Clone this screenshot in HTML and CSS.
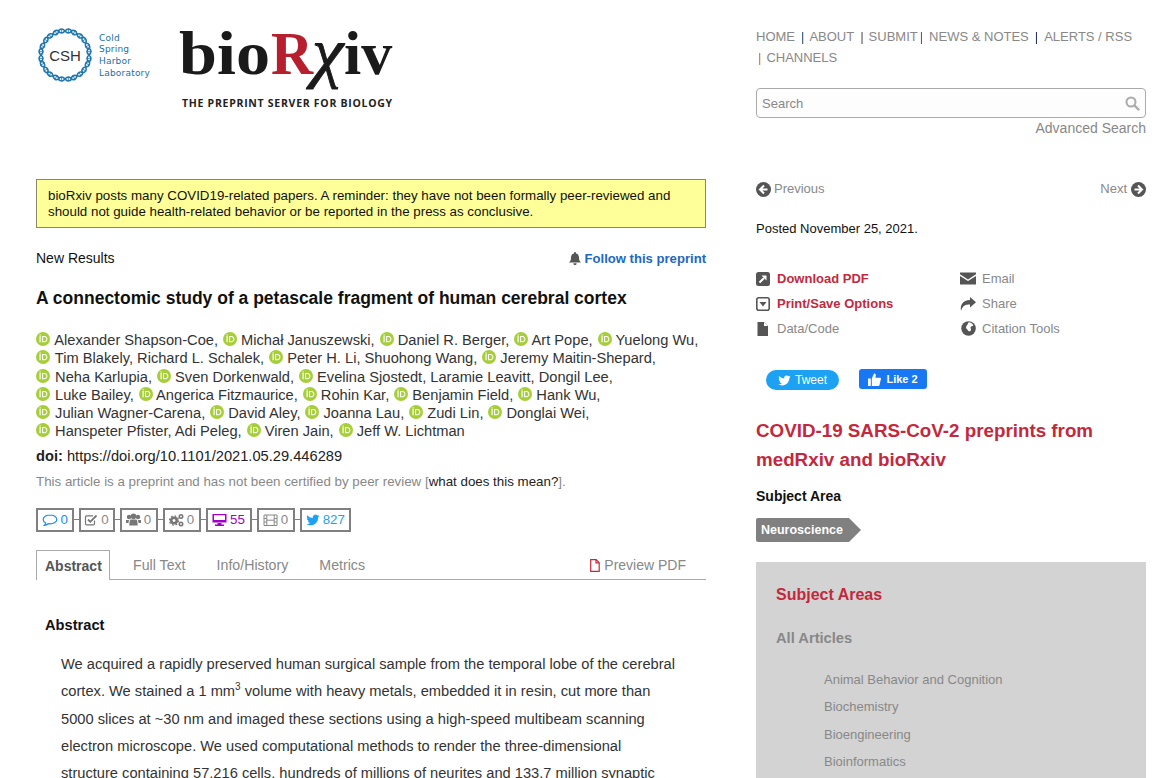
FILE: index.html
```html
<!DOCTYPE html>
<html lang="en">
<head>
<meta charset="utf-8">
<title>bioRxiv</title>
<link rel="stylesheet" href="styles.css">
</head>
<body>
<svg class="defs" width="0" height="0" aria-hidden="true">
  <defs>
    <symbol id="orcid" viewBox="0 0 12 12">
      <circle cx="6" cy="6" r="6" fill="#a6ce39"/>
      <rect x="3" y="3.400" width="1" height="5.400" fill="#fff"/>
      <rect x="3" y="2" width="1" height="1" fill="#fff"/>
      <path d="M5.200 3.400h2c1.700 0 2.600 1.200 2.600 2.700S8.900 8.800 7.200 8.800h-2zM6.100 4.200v3.800h1.100c1.100 0 1.700-.8 1.700-1.900S8.300 4.200 7.200 4.200z" fill="#fff" fill-rule="evenodd"/>
    </symbol>
    <g id="helix">
      <path d="M-6.800 -24 Q-3.400 -28 0 -24 Q3.400 -20 6.800 -24" fill="none" stroke="#1f77ae" stroke-width="1.600"/>
      <path d="M-6.800 -24 Q-3.400 -20 0 -24 Q3.400 -28 6.800 -24" fill="none" stroke="#1f77ae" stroke-width="1.600"/>
      <path d="M-3.400 -26 V-22 M3.400 -26 V-22" stroke="#1f77ae" stroke-width=".8"/>
    </g>
  </defs>
</svg>
<div class="page">
  <main class="main">
    <header class="brand">
      <a class="csh">
        <span class="ring">
          <svg width="54" height="54" viewBox="-27 -27 54 54">
            <use href="#helix"/><use href="#helix" transform="rotate(30)"/><use href="#helix" transform="rotate(60)"/><use href="#helix" transform="rotate(90)"/><use href="#helix" transform="rotate(120)"/><use href="#helix" transform="rotate(150)"/><use href="#helix" transform="rotate(180)"/><use href="#helix" transform="rotate(210)"/><use href="#helix" transform="rotate(240)"/><use href="#helix" transform="rotate(270)"/><use href="#helix" transform="rotate(300)"/><use href="#helix" transform="rotate(330)"/>
          </svg>
          <span class="ring-text">CSH</span>
        </span>
        <span class="csh-name">Cold<br>Spring<br>Harbor<br>Laboratory</span>
      </a>
      <a class="biorxiv">
        <span class="wordmark"><span class="wm-bio">bio</span><span class="wm-r">R</span><span class="wm-chi">χ</span><span class="wm-iv">iv</span></span>
        <span class="tagline">THE PREPRINT SERVER FOR BIOLOGY</span>
      </a>
    </header>

    <div class="notice">bioRxiv posts many COVID19-related papers. A reminder: they have not been formally peer-reviewed and should not guide health-related behavior or be reported in the press as conclusive.</div>

    <div class="kind-row">
      <span class="kind">New Results</span>
      <a class="follow">
        <svg class="i-bell" width="12" height="13" viewBox="0 0 12 13"><path d="M6 0a1 1 0 0 1 1 1v.6c2 .4 3 2 3 3.900 0 2.500.6 3.800 2 5H0c1.400-1.200 2-2.500 2-5C2 3.600 3 2 5 1.600V1a1 1 0 0 1 1-1zM4.500 11.200h3A1.500 1.500 0 0 1 6 13a1.500 1.500 0 0 1-1.500-1.800z" fill="#555"/></svg>
        Follow this preprint</a>
    </div>

    <h1 class="title">A connectomic study of a petascale fragment of human cerebral cortex</h1>

    <div class="authors">
      <div class="a-line"><svg class="orcid"><use href="#orcid"/></svg> Alexander Shapson-Coe, <svg class="orcid"><use href="#orcid"/></svg> Michał Januszewski, <svg class="orcid"><use href="#orcid"/></svg> Daniel R. Berger, <svg class="orcid"><use href="#orcid"/></svg> Art Pope, <svg class="orcid"><use href="#orcid"/></svg> Yuelong Wu,</div>
      <div class="a-line"><svg class="orcid"><use href="#orcid"/></svg> Tim Blakely, Richard L. Schalek, <svg class="orcid"><use href="#orcid"/></svg> Peter H. Li, Shuohong Wang, <svg class="orcid"><use href="#orcid"/></svg> Jeremy Maitin-Shepard,</div>
      <div class="a-line"><svg class="orcid"><use href="#orcid"/></svg> Neha Karlupia, <svg class="orcid"><use href="#orcid"/></svg> Sven Dorkenwald, <svg class="orcid"><use href="#orcid"/></svg> Evelina Sjostedt, Laramie Leavitt, Dongil Lee,</div>
      <div class="a-line"><svg class="orcid"><use href="#orcid"/></svg> Luke Bailey, <svg class="orcid"><use href="#orcid"/></svg> Angerica Fitzmaurice, <svg class="orcid"><use href="#orcid"/></svg> Rohin Kar, <svg class="orcid"><use href="#orcid"/></svg> Benjamin Field, <svg class="orcid"><use href="#orcid"/></svg> Hank Wu,</div>
      <div class="a-line"><svg class="orcid"><use href="#orcid"/></svg> Julian Wagner-Carena, <svg class="orcid"><use href="#orcid"/></svg> David Aley, <svg class="orcid"><use href="#orcid"/></svg> Joanna Lau, <svg class="orcid"><use href="#orcid"/></svg> Zudi Lin, <svg class="orcid"><use href="#orcid"/></svg> Donglai Wei,</div>
      <div class="a-line"><svg class="orcid"><use href="#orcid"/></svg> Hanspeter Pfister, Adi Peleg, <svg class="orcid"><use href="#orcid"/></svg> Viren Jain, <svg class="orcid"><use href="#orcid"/></svg> Jeff W. Lichtman</div>
    </div>

    <div class="doi"><b>doi:</b> https://doi.org/10.1101/2021.05.29.446289</div>
    <div class="cert">This article is a preprint and has not been certified by peer review [<a class="cert-link">what does this mean?</a>].</div>

    <div class="badges">
      <span class="badge b-blue">
        <svg width="16" height="14" viewBox="0 0 16 14"><path d="M8 2C4.300 2 1.200 4 1.200 6.500c0 1.400 1 2.700 2.500 3.500-.2 1-.8 1.800-1.400 2.400 1.400-.2 2.800-.8 3.800-1.700.6.100 1.200.2 1.900.2 3.700 0 6.800-2 6.800-4.400S11.700 2 8 2z" fill="none" stroke="#1e88ff" stroke-width="1.200"/></svg>
        0</span>
      <span class="badge">
        <svg width="14" height="14" viewBox="0 0 14 14"><path d="M10.500 7.500v3.300a1 1 0 0 1-1 1H2.500a1 1 0 0 1-1-1V3.800a1 1 0 0 1 1-1h6.500" fill="none" stroke="#777" stroke-width="1.200"/><path d="M4 6.500l2.300 2.300L12.500 2.500" fill="none" stroke="#777" stroke-width="1.800"/></svg>
        0</span>
      <span class="badge">
        <svg width="15" height="13" viewBox="0 1 15 12"><g fill="#777"><circle cx="3" cy="4.500" r="2.200"/><circle cx="12" cy="4.500" r="2.200"/><circle cx="7.500" cy="3.800" r="2.800"/><path d="M0 7.500h3.200c-.5 1-.7 2-.7 3H0zM15 7.500h-3.200c.5 1 .7 2 .7 3H15zM4.500 7h6c.8 1 1.200 3 1.200 6H3.300C3.300 10 3.700 8 4.500 7z"/></g></svg>
        0</span>
      <span class="badge">
        <svg width="15" height="14" viewBox="0 0 15 14"><g fill="none" stroke="#777"><circle cx="5" cy="7.500" r="2.800" stroke-width="2.600"/><circle cx="5" cy="7.500" r="4.600" stroke-width="1.200" stroke-dasharray="1.800 1.800"/><circle cx="12" cy="3.500" r="1.700" stroke-width="1.600"/><circle cx="12" cy="11" r="1.700" stroke-width="1.600"/></g></svg>
        0</span>
      <span class="badge b-purple">
        <svg width="15" height="14" viewBox="0 0 15 14"><path d="M.5 1h14v8.500H.5zM2 2.300v5.900h11V2.300zM5.500 10h4v1.600h2.500V13H3v-1.400h2.500z" fill="#a000c8" fill-rule="evenodd"/><rect x="1" y="7" width="13" height="2" fill="#a000c8"/></svg>
        55</span>
      <span class="badge">
        <svg width="15" height="14" viewBox="0 0 15 14"><path d="M1 2h13v10.500H1zM3.800 2v10.500M11.200 2v10.500M1 5.500h2.800M1 9h2.800M11.200 5.500H14M11.200 9H14M3.800 7.200h7.400" fill="none" stroke="#888" stroke-width="1"/></svg>
        0</span>
      <span class="badge b-tw">
        <svg width="14" height="14" viewBox="0 0 24 24"><path d="M23 4.900c-.8.400-1.700.6-2.600.8.900-.6 1.700-1.500 2-2.500-.9.500-1.900.9-2.900 1.100A4.600 4.600 0 0 0 11.600 8.500C7.800 8.300 4.400 6.500 2.100 3.700c-1.200 2.100-.6 4.800 1.400 6.100-.7 0-1.400-.2-2.100-.6 0 2.200 1.600 4.200 3.700 4.600-.7.200-1.400.2-2.100.1.600 1.900 2.300 3.200 4.300 3.200A9.300 9.300 0 0 1 .5 19c2.100 1.300 4.500 2.100 7.100 2.100 8.700 0 13.600-7.300 13.300-13.900.9-.6 1.700-1.400 2.300-2.300z" fill="#1da1f2"/></svg>
        827</span>
    </div>

    <nav class="tabs">
      <a class="tab tab-active">Abstract</a>
      <a class="tab">Full Text</a>
      <a class="tab">Info/History</a>
      <a class="tab">Metrics</a>
      <a class="tab tab-pdf">
        <svg width="10" height="13" viewBox="0 0 10 13"><path d="M.7.700h5.500l3 3v8.600H.7zM6 .7v3.200h3.200" fill="none" stroke="#c4283d" stroke-width="1.200"/></svg>
        Preview PDF</a>
    </nav>

    <section class="abstract">
      <h2 class="abs-head">Abstract</h2>
      <p class="abs-text">We acquired a rapidly preserved human surgical sample from the temporal lobe of the cerebral cortex. We stained a 1 mm<sup>3</sup> volume with heavy metals, embedded it in resin, cut more than 5000 slices at ~30 nm and imaged these sections using a high-speed multibeam scanning electron microscope. We used computational methods to render the three-dimensional structure containing 57,216 cells, hundreds of millions of neurites and 133.7 million synaptic</p>
    </section>
  </main>

  <aside class="side">
    <nav class="topnav">
      <a>HOME</a><i class="sep s1">|</i><a>ABOUT</a><i class="sep s2">|</i><a>SUBMIT</a><i class="sep s3">|</i><a>NEWS &amp; NOTES</a><i class="sep s4">|</i><a>ALERTS / RSS</a><br><i class="sep s5">|</i><a>CHANNELS</a>
    </nav>
    <div class="search">
      <span>Search</span>
      <svg width="15" height="15" viewBox="0 0 15 15"><circle cx="6" cy="6" r="4.500" fill="none" stroke="#aaa" stroke-width="2"/><path d="M9.500 9.500l4 4" stroke="#aaa" stroke-width="2.400" stroke-linecap="round"/></svg>
    </div>
    <a class="adv">Advanced Search</a>

    <div class="pager">
      <a class="pg">
        <svg width="15" height="15" viewBox="0 0 15 15"><circle cx="7.500" cy="7.500" r="7.500" fill="#555"/><path d="M8 3.500L4 7.500l4 4M4.500 7.500h7" fill="none" stroke="#fff" stroke-width="2"/></svg>
        Previous</a>
      <a class="pg">Next
        <svg width="15" height="15" viewBox="0 0 15 15"><circle cx="7.500" cy="7.500" r="7.500" fill="#555"/><path d="M7 3.500l4 4-4 4M10.500 7.500h-7" fill="none" stroke="#fff" stroke-width="2"/></svg>
      </a>
    </div>

    <p class="posted">Posted November 25, 2021.</p>

    <div class="tools">
      <a class="tool tool-red"><svg width="14" height="14" viewBox="0 0 14 14"><rect width="14" height="14" rx="2.500" fill="#555"/><path d="M3.500 10.500L8 6" stroke="#fff" stroke-width="2"/><path d="M5.500 3.500h5v5z" fill="#fff"/></svg>Download PDF</a>
      <a class="tool tool-wide"><svg width="16" height="13" viewBox="0 0 16 13"><path d="M0 .5h16v1.800L8 7.500 0 2.300zM0 4l8 5 8-5v8.500H0z" fill="#555"/></svg>Email</a>
      <a class="tool tool-red"><svg width="14" height="14" viewBox="0 0 14 14"><rect x=".8" y=".8" width="12.400" height="12.400" rx="2" fill="none" stroke="#555" stroke-width="1.600"/><path d="M3.500 5h7L7 9.500z" fill="#555"/></svg>Print/Save Options</a>
      <a class="tool tool-wide"><svg width="16" height="14" viewBox="0 0 16 14"><path d="M10 0l6 5.300L10 10.500V7.500C5.500 7.500 2.500 8.500 1 14c-1-6 1.500-10.500 9-11z" fill="#555"/></svg>Share</a>
      <a class="tool"><svg width="14" height="14" viewBox="0 0 14 14"><path d="M1.500 0H8l4 4v10H1.500z" fill="#555"/><path d="M8 0v4h4z" fill="#fff"/></svg>Data/Code</a>
      <a class="tool tool-wide"><svg width="16" height="15" viewBox="0 0 15 14"><circle cx="8" cy="7" r="6.800" fill="#555"/><path d="M8 1.200c2 .3 4 1.200 4.500 3-1 .8-2 .4-2.500 1.400-.4 1 .8 2 .2 3.200-.6 1-1.700 1-2.500.5-.4-1.400-1.800-1.600-2-3C5.500 4.800 7 4 8 1.200z" fill="#fff"/></svg>Citation Tools</a>
    </div>

    <div class="social">
      <a class="tweet"><svg width="13" height="11" viewBox="0 0 24 20"><path d="M23 2.900c-.8.400-1.700.6-2.600.8.900-.6 1.700-1.500 2-2.500-.9.500-1.900.9-2.900 1.100A4.600 4.600 0 0 0 11.600 6.500C7.800 6.300 4.400 4.500 2.100 1.700c-1.200 2.100-.6 4.800 1.400 6.100-.7 0-1.400-.2-2.100-.6 0 2.200 1.600 4.200 3.700 4.600-.7.200-1.400.2-2.100.1.600 1.900 2.300 3.200 4.300 3.200A9.300 9.300 0 0 1 .5 17c2.100 1.300 4.500 2.100 7.100 2.100 8.700 0 13.600-7.300 13.300-13.900.9-.6 1.700-1.400 2.300-2.300z" fill="#fff"/></svg>Tweet</a>
      <a class="like"><svg width="13" height="13" viewBox="0 0 13 13"><path d="M0 5.500h2.800V13H0zM3.800 5.500L6 .5c1.300 0 2 .8 1.800 2L7.400 4.700H12c.8 0 1.100.8.900 1.300l-1.400 6c-.1.600-.6 1-1.200 1H3.800z" fill="#fff"/></svg>Like 2</a>
    </div>

    <h2 class="covid">COVID-19 SARS-CoV-2 preprints from medRxiv and bioRxiv</h2>

    <h3 class="sa-label">Subject Area</h3>
    <span class="tag">Neuroscience</span>

    <div class="areas">
      <h3 class="areas-title">Subject Areas</h3>
      <h4 class="areas-all">All Articles</h4>
      <ul class="areas-list">
        <li>Animal Behavior and Cognition</li>
        <li>Biochemistry</li>
        <li>Bioengineering</li>
        <li>Bioinformatics</li>
      </ul>
    </div>
  </aside>
</div>
</body>
</html>
```
FILE: styles.css
```css
* { box-sizing: border-box; }
html, body { margin: 0; height: 778px; overflow: hidden; background: #fff; }
body { font-family: "Liberation Sans", Arial, sans-serif; font-size: 14px; color: #222; }
a { color: inherit; text-decoration: none; }
.defs { position: absolute; }
.page { display: flex; gap: 50px; padding-left: 36px; width: 1146px; }
.main { width: 670px; flex: none; }
.side { width: 390px; flex: none; padding-top: 26px; }

/* Brand */
.brand { height: 179px; display: flex; align-items: flex-start; padding-top: 28px; }
.csh { display: flex; align-items: center; margin-left: 2px; width: 142px; color: #1a6fa6; }
.ring { position: relative; width: 54px; height: 54px; flex: none; }
.ring svg { display: block; }
.ring-text { position: absolute; inset: 0; display: flex; align-items: center; justify-content: center; font-size: 15px; color: #333; }
.csh-name { font-family: "DejaVu Sans", sans-serif; font-size: 9px; line-height: 11.600px; margin: 2px 0 0 7px; letter-spacing: .2px; }
.biorxiv { display: flex; flex-direction: column; margin-top: -11px; }
.wordmark { display: flex; font-family: "Liberation Serif", serif; font-weight: 700; font-size: 62px; line-height: 72px; color: #1a1a1a; white-space: nowrap; margin-left: -1px; }
.wm-bio { width: 92px; transform: scaleX(1.100); transform-origin: 0 50%; }
.wm-r { width: 41px; color: #b71f2f; transform: scaleX(.94); transform-origin: 0 50%; }
.wm-chi { width: 32px; font-style: italic; font-weight: 400; -webkit-text-stroke: .8px #1a1a1a; transform: scale(1.150, 1.100); transform-origin: 0 60%; }
.wm-iv { width: 48px; }
.tagline { font-family: "Open Sans", sans-serif; font-weight: 700; font-size: 10.500px; line-height: 14px; letter-spacing: .72px; color: #222; margin: 7px 0 0 2px; white-space: nowrap; }

/* Main */
.notice { height: 49px; background: #ffff99; border: 1px solid #8a8a6a; padding: 8px 12px 8px 11px; font-size: 13.330px; line-height: 16px; color: #111; }
.kind-row { display: flex; justify-content: space-between; align-items: center; margin-top: 21px; height: 18px; }
.kind { font-size: 14px; color: #111; }
.follow { font-size: 13.100px; font-weight: 700; color: #2068c0; }
.i-bell { vertical-align: -2px; }
.title { margin: 19px 0 0; font-size: 17.500px; line-height: 24px; font-weight: 700; color: #111; }
.authors { margin-top: 21px; font-size: 14.670px; line-height: 18.300px; color: #333; white-space: nowrap; }
.orcid { width: 14px; height: 14px; vertical-align: -1px; margin-left: .9px; }
.a-line > .orcid:first-child { margin: 0 1px 0 0; }
.doi { margin-top: 6px; font-size: 14.670px; line-height: 18px; color: #222; }
.cert { margin-top: 8px; font-size: 13.330px; line-height: 18px; color: #888; }
.cert-link { color: #222; }
.badges { display: flex; gap: 5px; margin-top: 17px; height: 25px; align-items: flex-start; }
.badge { height: 24px; width: 38px; flex: none; display: flex; align-items: center; justify-content: center; gap: 3px; border: 2px solid #808080; font-size: 13.330px; color: #888; position: relative; }
.badge:nth-child(1) { width: 37.500px; }
.badge:nth-child(2) { width: 36px; }
.badge:nth-child(5) { width: 46px; }
.badge:nth-child(7) { width: 51.500px; }
.badge + .badge::before { content: ""; position: absolute; left: -7px; top: 9px; width: 5px; height: 1px; background: #808080; }
.b-blue { color: #1e88ff; }
.b-purple { color: #a000c8; }
.b-tw { color: #1da1f2; }
.tabs { display: flex; margin-top: 17px; height: 30px; border-bottom: 1px solid #aaa; font-size: 14.200px; color: #888; align-items: stretch; }
.tab { display: flex; align-items: center; padding: 2px 8px 0; margin-right: 15px; gap: 4px; }
.tab-active { width: 74px; font-size: 14px; border: 1px solid #aaa; border-bottom: 0; background: #fff; font-weight: 700; color: #555; height: 30px; }
.tab-pdf { margin-left: auto; margin-right: 20px; padding: 2px 0 0; font-size: 14px; }
.abstract { padding: 0 25px 0 9px; }
.abs-head { margin: 36px 0 0; font-size: 14.670px; line-height: 18px; font-weight: 700; color: #111; }
.abs-text { margin: 17px 0 0 16px; font-size: 14.670px; line-height: 27.400px; color: #333; }
.abs-text sup { font-size: 10px; line-height: 0; }

/* Side */
.topnav { font-size: 13px; line-height: 21px; color: #888; white-space: nowrap; }
.sep { font-style: normal; margin: 0 6px; color: transparent; -webkit-background-clip: text; background-clip: text; background-image: linear-gradient(90deg, #c4701c 50%, #24456f 50%); }
.s1 { margin-right: 5px; }
.s2 { margin-right: 5px; background-image: linear-gradient(90deg, #a0522d 50%, #2a2a40 50%); }
.s3 { margin: 0 6px 0 2px; background-image: linear-gradient(90deg, #c4701c 50%, #1f5fae 50%); }
.s4 { background-image: linear-gradient(90deg, #c08a20 50%, #1c2a50 50%); }
.s5 { margin: 0 5px 0 2px; background-image: linear-gradient(90deg, #1f5fae 50%, #c4701c 50%); }
.search { display: flex; justify-content: space-between; align-items: center; height: 30px; margin-top: 20px; border: 1px solid #aaa; border-radius: 4px; padding: 0 5px; font-size: 13px; color: #888; background: #fdfdfd; }
.adv { display: block; text-align: right; font-size: 14px; line-height: 20px; color: #888; }
.pager { display: flex; justify-content: space-between; margin-top: 43px; font-size: 13px; line-height: 16px; color: #888; }
.pg { display: flex; align-items: center; gap: 3px; }
.pg:last-child { gap: 4px; }
.posted { margin: 24px 0 0; font-size: 13px; line-height: 16px; color: #111; }
.tools { display: grid; grid-template-columns: 204px 1fr; grid-auto-rows: 25px; margin-top: 29px; font-size: 13px; color: #888; }
.tool { display: flex; align-items: center; gap: 7px; }
.tool svg { flex: none; }
.tool-wide { gap: 6px; }
.tool-red { color: #c4283d; font-weight: 700; }
.social { display: flex; align-items: flex-start; gap: 20px; margin: 28px 0 0 10px; height: 21px; }
.tweet { display: flex; align-items: center; justify-content: center; gap: 4px; width: 73px; height: 20px; margin-top: 1px; border-radius: 10px; background: #1da1f2; color: #fff; font-size: 12px; }
.like { display: flex; align-items: center; justify-content: center; gap: 5px; width: 68px; height: 20px; border-radius: 3px; background: #1877f2; color: #fff; font-size: 11px; font-weight: 700; }
.covid { margin: 26px 0 0; font-size: 18.800px; line-height: 29px; font-weight: 700; color: #c4283d; }
.sa-label { margin: 13px 0 0; font-size: 14px; line-height: 18px; font-weight: 700; color: #111; }
.tag { display: inline-flex; align-items: center; height: 24px; width: 105px; margin-top: 13px; padding-left: 5px; background: #808080; color: #fff; font-size: 12.500px; font-weight: 700; border-radius: 2px 0 0 2px; clip-path: polygon(0 0, 93px 0, 100% 50%, 93px 100%, 0 100%); }
.areas { margin-top: 20px; padding: 23px 20px 0; height: 240px; background: #d3d3d3; }
.areas-title { margin: 0; font-size: 16px; line-height: 20px; font-weight: 700; color: #c4283d; }
.areas-all { margin: 23px 0 0; font-size: 14.700px; line-height: 20px; font-weight: 700; color: #888; }
.areas-list { list-style: none; margin: 18px 0 0; padding: 0 0 0 48px; font-size: 13px; line-height: 27.400px; color: #888; }
```
